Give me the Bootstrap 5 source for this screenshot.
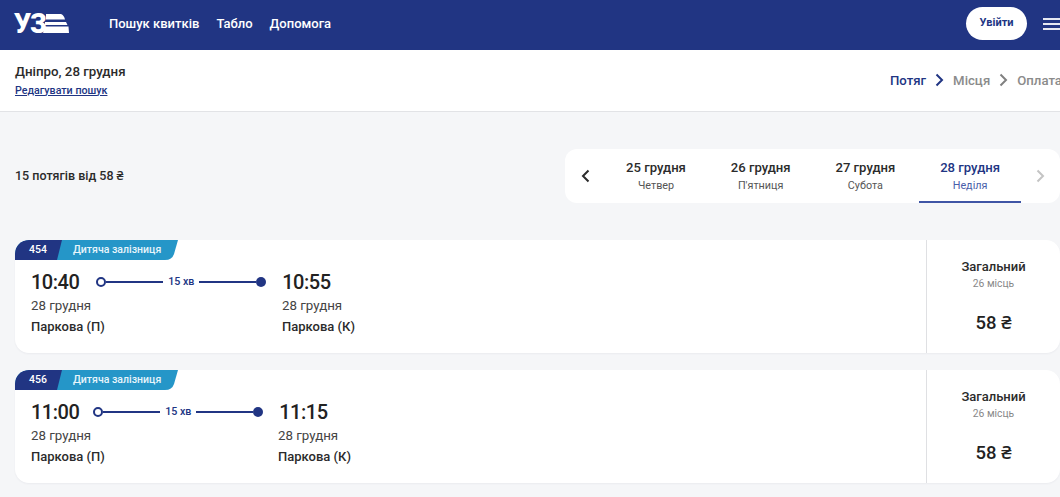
<!doctype html>
<html lang="uk">
<head>
<meta charset="utf-8">
<title>Пошук квитків</title>
<link href="https://cdn.jsdelivr.net/npm/bootstrap@5.3.0/dist/css/bootstrap.min.css" rel="stylesheet">
<style>
html,body{overflow:hidden;height:497px}
body{background:#f5f6f8;font-family:Roboto,"Noto Sans",sans-serif;color:#2b2b2b;font-size:14px;width:1060px}
.uz-head{height:50px;background:#213583;padding:0 0 3px 15px}
.uz-logo{width:54px;height:24px;position:relative;margin:3px 40px 0 0}
.uz-logo-text{font:900 27px/24px Roboto,sans-serif;color:#fff;letter-spacing:-1px;position:absolute;left:-1px;top:-1px}
.uz-logo svg{position:absolute;left:0;top:0}
.uz-link{color:#fff;text-decoration:none;font-weight:500;font-size:13px;margin-right:17px}
.uz-login{width:61px;height:33px;border-radius:17px;background:#fff;color:#213583;font-size:11px;font-weight:700;border:0;padding:0;margin-right:16px}
.uz-burger{width:17px;flex:none;margin-top:1px}
.uz-burger i{display:block;height:2px;background:#e6e8f2;margin:3px 0}
.uz-sub{height:62px;background:#fff;border-bottom:1px solid #e2e3e6;padding-left:15px}
.uz-route{font-size:13.300px;font-weight:500;line-height:18px}
.uz-edit{font-size:10.700px;font-weight:500;color:#213583;line-height:17px;display:block;margin-top:1px}
.uz-steps{flex:none;font-size:13.200px;font-weight:500;color:#8b8b8b;gap:9px;width:170px;white-space:nowrap}
.uz-steps svg{flex:none}
.uz-steps .on{color:#213583}
.uz-summary{height:54px;margin:37px 0 37px;padding-left:15px}
.uz-count{font-size:12.500px;font-weight:500}
.uz-strip{width:495px;height:54px;background:#fff;border-radius:12px;padding-left:16px}
.uz-strip svg{flex:none}
.uz-tabs{margin-left:15px;gap:2.700px;margin-right:15px}
.uz-tab{width:102px;height:54px;padding-top:10px;line-height:17px;text-align:center;flex:none}
.uz-tab b{display:block;font-size:13.100px;font-weight:500}
.uz-tab span{display:block;font-size:10.800px;color:#555;line-height:15px;margin-top:2px}
.uz-tab.now{color:#213583;border-bottom:2px solid #3f55a5}
.uz-tab.now span{color:#4a5eaa}
.uz-card{height:113px;margin:0 0 17px 15px;background:#fff;border-radius:14px;box-shadow:0 1px 2px rgba(30,40,80,.05);position:relative;overflow:hidden}
.uz-badge{position:absolute;left:0;top:0;width:163px;height:20px;font-size:10.500px;color:#fff;font-weight:500}
.uz-badge svg{position:absolute;left:0;top:0}
.uz-num{position:absolute;left:14px;top:3px;line-height:14px}
.uz-kind{position:absolute;left:58px;top:3px;line-height:14px;color:#e8f5fb}
.uz-main{padding:29px 0 0 16px}
.uz-time{font-size:20px;letter-spacing:-.5px;font-weight:500;line-height:26px;color:#222;margin-right:17px}
.uz-time-s{margin-right:14px}
.uz-date{font-size:13.300px;color:#444;line-height:20px;margin-top:1px}
.uz-st{font-size:13px;font-weight:500;line-height:20px;margin-top:1px}
.uz-line{width:170px;margin-right:16px;height:26px;display:flex;align-items:center}
.uz-line i{flex:1;height:2px;background:#213583}
.uz-line .o{flex:none;width:10px;height:10px;padding:0;border-radius:50%;border:2px solid #213583;background:#fff}
.uz-line .d{flex:none;width:10px;height:10px;padding:0;border-radius:50%;background:#213583}
.uz-line span{font-size:10.700px;font-weight:500;color:#213583;padding:0 5px}
.uz-w1{width:251px}
.uz-w2{width:247px}
.uz-price{width:134px;flex:none;border-left:1px solid #dfe0e3;text-align:center;padding-top:18px}
.uz-cl{font-size:13px;font-weight:500;line-height:17px}
.uz-left{font-size:10.300px;color:#888;line-height:16px;margin-top:1px}
.uz-sum{font-size:18.500px;font-weight:500;line-height:24px;margin-top:19px;color:#222}
</style>
</head>
<body>
<header class="uz-head d-flex align-items-center">
  <div class="uz-logo">
    <span class="uz-logo-text">УЗ</span>
    <svg width="54" height="24" viewBox="0 0 54 24"><path d="M31 1H46Q49 2 50 6.500H31ZM30 9H51L52.500 12H30ZM30 13.500H53.500L54 20H28Z" fill="#fff"/></svg>
  </div>
  <a class="uz-link" href="#">Пошук квитків</a>
  <a class="uz-link" href="#">Табло</a>
  <a class="uz-link" href="#">Допомога</a>
  <button class="uz-login ms-auto" type="button">Увійти</button>
  <div class="uz-burger"><i></i><i></i><i></i></div>
</header>
<section class="uz-sub d-flex align-items-center justify-content-between">
  <div>
    <div class="uz-route">Дніпро, 28 грудня</div>
    <a class="uz-edit" href="#">Редагувати пошук</a>
  </div>
  <div class="uz-steps d-flex align-items-center">
    <span class="on">Потяг</span>
    <svg width="9" height="14" viewBox="0 0 9 14"><path d="M1.500 1.500 7 7l-5.500 5.500" fill="none" stroke="#213583" stroke-width="2"/></svg>
    <span>Місця</span>
    <svg width="9" height="14" viewBox="0 0 9 14"><path d="M1.500 1.500 7 7l-5.500 5.500" fill="none" stroke="#808080" stroke-width="2"/></svg>
    <span>Оплата</span>
  </div>
</section>
<section class="uz-summary d-flex align-items-center justify-content-between">
  <div class="uz-count">15 потягів від 58 ₴</div>
  <div class="uz-strip d-flex align-items-center">
    <svg width="9" height="14" viewBox="0 0 9 14"><path d="M7.500 1.500 2 7l5.500 5.500" fill="none" stroke="#2b2b2b" stroke-width="2"/></svg>
    <div class="uz-tabs d-flex">
      <div class="uz-tab"><b>25 грудня</b><span>Четвер</span></div>
      <div class="uz-tab"><b>26 грудня</b><span>П'ятниця</span></div>
      <div class="uz-tab"><b>27 грудня</b><span>Субота</span></div>
      <div class="uz-tab now"><b>28 грудня</b><span>Неділя</span></div>
    </div>
    <svg width="9" height="14" viewBox="0 0 9 14"><path d="M1.500 1.500 7 7l-5.500 5.500" fill="none" stroke="#c4c4c4" stroke-width="2"/></svg>
  </div>
</section>
<article class="uz-card d-flex">
  <div class="uz-badge">
    <svg width="163" height="20" viewBox="0 0 163 20"><path d="M0 20V14Q0 0 14 0H163L159 14Q157 20 150 20Z" fill="#2596c8"/><path d="M0 20V14Q0 0 14 0H47L42 20Z" fill="#213583"/></svg>
    <span class="uz-num">454</span><span class="uz-kind">Дитяча залізниця</span>
  </div>
  <div class="uz-main flex-grow-1">
    <div class="d-flex">
      <div class="uz-time">10:40</div>
      <div class="uz-line"><span class="o"></span><i></i><span>15 хв</span><i></i><span class="d"></span></div>
      <div class="uz-time">10:55</div>
    </div>
    <div class="d-flex">
      <div class="uz-w1"><div class="uz-date">28 грудня</div><div class="uz-st">Паркова (П)</div></div>
      <div><div class="uz-date">28 грудня</div><div class="uz-st">Паркова (К)</div></div>
    </div>
  </div>
  <div class="uz-price"><div class="uz-cl">Загальний</div><div class="uz-left">26 місць</div><div class="uz-sum">58 ₴</div></div>
</article>
<article class="uz-card d-flex">
  <div class="uz-badge">
    <svg width="163" height="20" viewBox="0 0 163 20"><path d="M0 20V14Q0 0 14 0H163L159 14Q157 20 150 20Z" fill="#2596c8"/><path d="M0 20V14Q0 0 14 0H47L42 20Z" fill="#213583"/></svg>
    <span class="uz-num">456</span><span class="uz-kind">Дитяча залізниця</span>
  </div>
  <div class="uz-main flex-grow-1">
    <div class="d-flex">
      <div class="uz-time uz-time-s">11:00</div>
      <div class="uz-line"><span class="o"></span><i></i><span>15 хв</span><i></i><span class="d"></span></div>
      <div class="uz-time">11:15</div>
    </div>
    <div class="d-flex">
      <div class="uz-w2"><div class="uz-date">28 грудня</div><div class="uz-st">Паркова (П)</div></div>
      <div><div class="uz-date">28 грудня</div><div class="uz-st">Паркова (К)</div></div>
    </div>
  </div>
  <div class="uz-price"><div class="uz-cl">Загальний</div><div class="uz-left">26 місць</div><div class="uz-sum">58 ₴</div></div>
</article>
<script src="https://cdn.jsdelivr.net/npm/bootstrap@5.3.0/dist/js/bootstrap.bundle.min.js"></script>
</body>
</html>
